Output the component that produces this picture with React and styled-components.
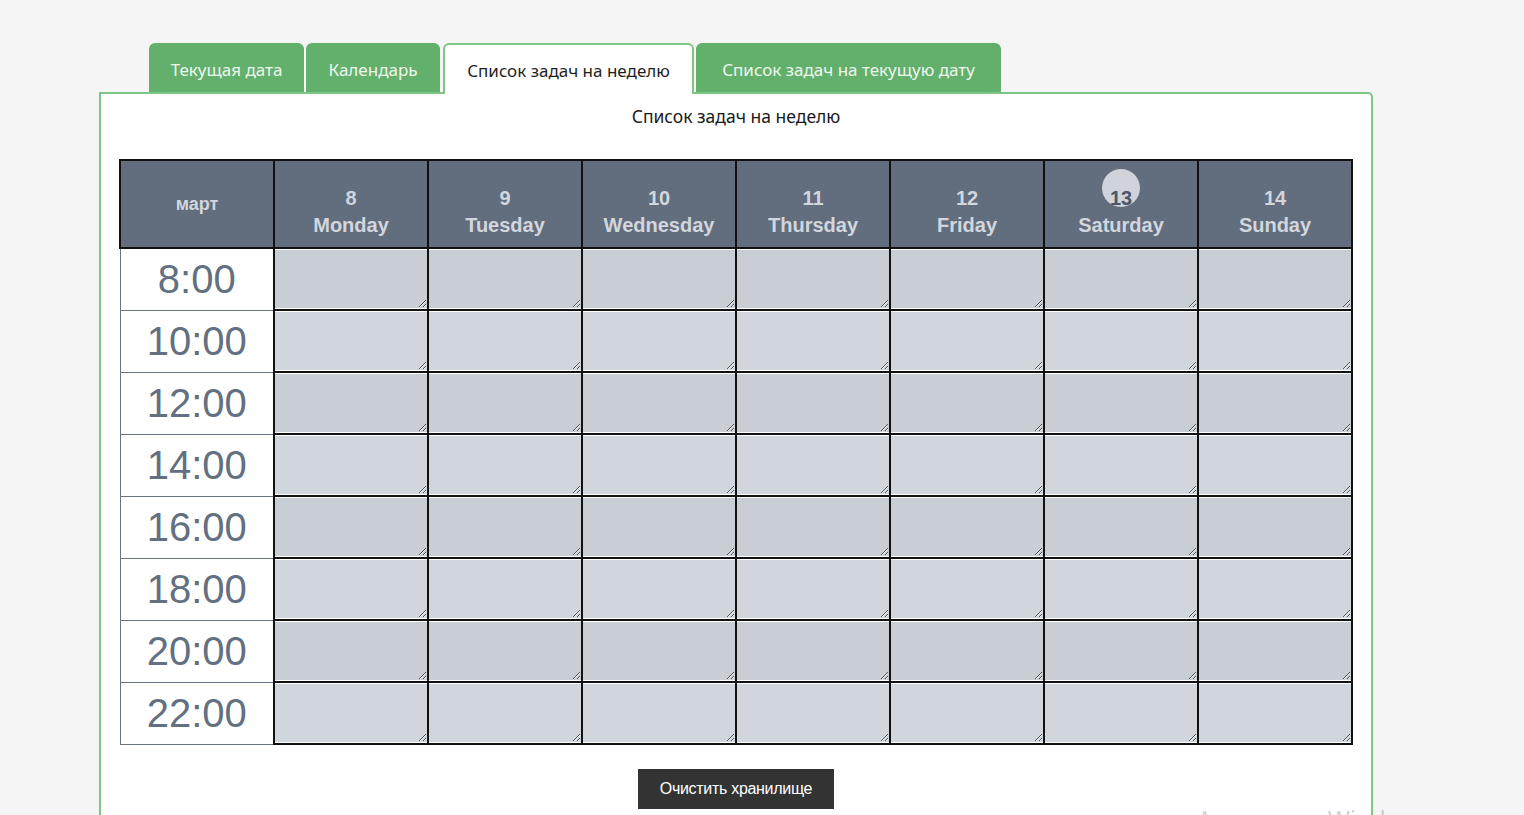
import React from "react";
import styled, { createGlobalStyle } from "styled-components";

const GlobalStyle = createGlobalStyle`
  html, body {
    margin: 0;
    padding: 0;
    background: #f5f5f5;
    font-family: "Noto Sans", "Open Sans", sans-serif;
  }
`;

const days = [
  { num: 8, name: "Monday" },
  { num: 9, name: "Tuesday" },
  { num: 10, name: "Wednesday" },
  { num: 11, name: "Thursday" },
  { num: 12, name: "Friday" },
  { num: 13, name: "Saturday", today: true },
  { num: 14, name: "Sunday" },
];

const hours = ["8:00", "10:00", "12:00", "14:00", "16:00", "18:00", "20:00", "22:00"];

const tabs = [
  { label: "Текущая дата", width: 155 },
  { label: "Календарь", width: 134 },
  { label: "Список задач на неделю", width: 251, active: true },
  { label: "Список задач на текущую дату", width: 305 },
];

const App = () => {
  return (
    <>
      <GlobalStyle />
      <Page>
        <TabBar>
          {tabs.map((t) => (
            <Tab key={t.label} $active={t.active} $width={t.width}>
              {t.label}
            </Tab>
          ))}
        </TabBar>
        <Panel>
          <Title>Список задач на неделю</Title>
          <Week>
            <thead>
              <tr>
                <MonthCell>март</MonthCell>
                {days.map((d) => (
                  <DayCell key={d.num}>
                    <DayNum $today={d.today}>{d.num}</DayNum>
                    <span>{d.name}</span>
                  </DayCell>
                ))}
              </tr>
            </thead>
            <tbody>
              {hours.map((h, i) => (
                <tr key={h}>
                  <TimeCell>{h}</TimeCell>
                  {days.map((d) => (
                    <TaskCell key={d.num}>
                      <TaskInput $odd={i % 2 === 0} />
                    </TaskCell>
                  ))}
                </tr>
              ))}
            </tbody>
          </Week>
          <ClearButton>Очистить хранилище</ClearButton>
        </Panel>
      </Page>
      <Watermark>Активация Windows</Watermark>
    </>
  );
};

const Page = styled.div`
  padding: 43px 0 0 99px;
  width: 1274px;
`;

const TabBar = styled.div`
  display: flex;
  align-items: flex-end;
  gap: 2px;
  padding-left: 50px;
  position: relative;
  z-index: 1;
`;

const Tab = styled.div`
  box-sizing: border-box;
  width: ${(p) => p.$width}px;
  height: ${(p) => (p.$active ? 51 : 49)}px;
  margin: ${(p) => (p.$active ? "0 0 -2px 1px" : "0")};
  display: flex;
  align-items: center;
  justify-content: center;
  padding-top: ${(p) => (p.$active ? 2 : 4)}px;
  border-radius: 6px 6px 0 0;
  font-size: 17px;
  color: ${(p) => (p.$active ? "#1f1f1f" : "#eef7ee")};
  background: ${(p) => (p.$active ? "#fff" : "#63b06c")};
  border: ${(p) => (p.$active ? "2px solid #7dc685" : "none")};
  border-bottom: none;
  white-space: nowrap;
`;

const Panel = styled.div`
  box-sizing: border-box;
  width: 1274px;
  background: #fff;
  border: 2px solid #7dc685;
  border-radius: 0 5px 0 0;
  padding: 10px 19px 30px;
  display: flex;
  flex-direction: column;
  align-items: center;
`;

const Title = styled.div`
  font-size: 17.5px;
  line-height: 24px;
  color: #1a1a1a;
  margin-bottom: 31px;
`;

const Week = styled.table`
  border-collapse: collapse;
  table-layout: fixed;
  width: 1232px;
  font-family: "Liberation Sans", Arial, sans-serif;
  th, td {
    width: 154px;
    box-sizing: border-box;
  }
`;

const HeadCell = styled.th`
  height: 88px;
  background: #626d7d;
  color: #d2d6dd;
  border: 2px solid #111;
  font-weight: bold;
  padding: 0;
`;

const MonthCell = styled(HeadCell)`
  font-size: 18px;
  border-top-left-radius: 4px;
`;

const DayCell = styled(HeadCell)`
  font-size: 20px;
  line-height: 27px;
  padding-top: 15px;
  span {
    display: block;
  }
`;

const DayNum = styled.span`
  position: relative;
  z-index: 0;
  color: ${(p) => (p.$today ? "#4b5666" : "inherit")};
  &::before {
    content: "";
    display: ${(p) => (p.$today ? "block" : "none")};
    position: absolute;
    left: 50%;
    top: -16px;
    width: 38px;
    height: 38px;
    margin-left: -19px;
    border-radius: 50%;
    background: #d0d4da;
    z-index: -1;
  }
`;

const TimeCell = styled.td`
  height: 62px;
  background: #fff;
  border: 1px solid #6b7482;
  border-right: 2px solid #111;
  text-align: center;
  font-size: 40px;
  color: #627081;
  padding: 0;
`;

const TaskCell = styled.td`
  height: 62px;
  padding: 0;
  border: 2px solid #111;
`;

const TaskInput = styled.textarea`
  display: block;
  box-sizing: border-box;
  width: 100%;
  height: 58px;
  margin: 0;
  border: none;
  outline: none;
  background: ${(p) => (p.$odd ? "#c9cdd4" : "#d1d5dc")};
  font-family: inherit;
`;

const ClearButton = styled.button`
  margin-top: 24px;
  width: 196px;
  height: 40px;
  border: none;
  background: #333;
  color: #fff;
  font-family: "Liberation Sans", Arial, sans-serif;
  font-size: 16px;
  letter-spacing: -0.3px;
  cursor: pointer;
`;

const Watermark = styled.div`
  position: fixed;
  left: 1197px;
  top: 802px;
  font-family: "Noto Sans", sans-serif;
  font-size: 24px;
  color: rgba(0, 0, 0, 0.18);
  white-space: nowrap;
  pointer-events: none;
`;

export default App;
